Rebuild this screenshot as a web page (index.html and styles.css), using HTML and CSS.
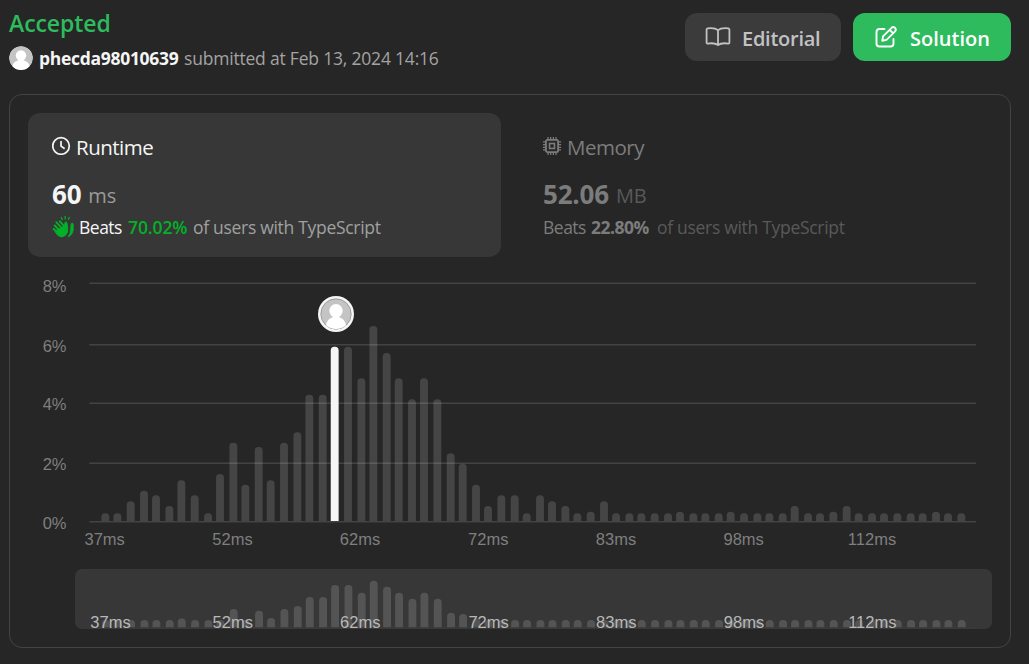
FILE: index.html
```html
<!DOCTYPE html>
<html lang="en">
<head>
<meta charset="utf-8">
<title>Submission result</title>
<link rel="stylesheet" href="styles.css">
</head>
<body>
<header class="header">
  <div class="summary">
    <h1 class="status">Accepted</h1>
    <div class="byline">
      <svg class="avatar" viewBox="0 0 24 24"><defs><clipPath id="round"><circle cx="12" cy="12" r="12"/></clipPath></defs><g clip-path="url(#round)"><circle cx="12" cy="12" r="12" fill="#c4c4c4"/><circle cx="12" cy="9.5" r="5.2" fill="#fff"/><path d="M9.5 12h5v2.2c3 1 6 2.8 6 6.300V24h-17v-3.500c0-3.500 3-5.300 6-6.300z" fill="#fff"/></g></svg>
      <span class="user">phecda98010639</span>
      <span class="when">submitted at Feb 13, 2024 14:16</span>
    </div>
  </div>
  <div class="actions">
    <button class="button"><svg class="book" viewBox="0 0 26 20" fill="none" stroke="currentColor" stroke-width="1.800" stroke-linejoin="round"><path d="M13 3.200C10.500.9 6 .9 2.700 1.300Q1.600 1.500 1.600 2.600V15.500Q1.600 16.800 2.800 16.600C6.500 16 10.500 16.200 13 18C15.500 16.200 19.500 16 23.200 16.600Q24.400 16.800 24.400 15.500V2.600Q24.400 1.500 23.300 1.300C20 .9 15.500.9 13 3.200zM13 3.200V18"/></svg><span class="label-editorial">Editorial</span></button>
    <button class="button primary"><svg class="pencil" viewBox="0 0 24 24" fill="none" stroke="currentColor" stroke-width="1.900" stroke-linecap="round" stroke-linejoin="round"><path d="M10.500 4H5.500Q2.500 4 2.500 7V18.500Q2.500 21.500 5.500 21.500H16.500Q19.500 21.500 19.500 18.500V14"/><path d="M8.300 15.700L9 11.400L17.600 2.800Q19.300 1.300 21 2.900Q22.600 4.600 21.100 6.300L12.500 14.900zM15.700 4.900L19 8.200"/></svg><span class="label-solution">Solution</span></button>
  </div>
</header>
<main class="card">
  <div class="tabs">
    <section class="tab active">
      <div class="title"><svg class="icon" viewBox="0 0 20 20" fill="none" stroke="currentColor" stroke-width="1.800" stroke-linecap="round"><circle cx="9.500" cy="10.500" r="8.700"/><path d="M9.500 5.800V10.700L12.700 12.900"/></svg><span class="t-runtime">Runtime</span></div>
      <div class="value"><b class="n-runtime">60</b><span class="unit u-ms">ms</span></div>
      <div class="beats"><svg class="clap" viewBox="0 0 22 22" fill="none" stroke="currentColor" stroke-linecap="round"><path d="M2.700 9.500L9 16M4.400 6.300L11 13.300M7.800 5.300L13.500 11.700M1.500 13L7 17" stroke-width="1.900"/><path d="M3.200 15.200L12.500 10L13 6.500Q14.500 4.800 15 7.500L15.700 12.500Q16 17 13.300 19.500Q9.500 22.300 6 19.500z" fill="currentColor" stroke-width="1"/><path d="M19.300 7.500Q21 6.200 21.300 8.500V14Q21 18.500 16 21.200Q19 17 18.600 13z" fill="currentColor" stroke-width=".7"/><path d="M9.300 1.500l1 2M13.200.5v2.500M17.300 1.500l-1 1.800" stroke-width="1.300"/></svg><span class="word">Beats</span><b class="pct">70.02%</b><span class="rest">of users with TypeScript</span></div>
    </section>
    <section class="tab memory">
      <div class="title"><svg class="icon" viewBox="0 0 20 20" fill="none" stroke="currentColor" stroke-width="1.900"><rect x="3.100" y="4.100" width="12.800" height="12.800" rx="1.700"/><rect x="6.900" y="7.900" width="5.200" height="5.200" stroke-width="1.700"/><path d="M5.300 4V1M8.100 4V1M10.900 4V1M13.700 4V1M5.300 20V17M8.100 20V17M10.900 20V17M13.700 20V17M0 6.300H3M0 9.100H3M0 11.900H3M0 14.700H3M16 6.300H19M16 9.100H19M16 11.900H19M16 14.700H19" stroke-width="1.300"/></svg><span class="t-memory">Memory</span></div>
      <div class="value"><b class="n-memory">52.06</b><span class="unit u-mb">MB</span></div>
      <div class="beats"><span class="word">Beats</span><b class="pct">22.80%</b><span class="rest">of users with TypeScript</span></div>
    </section>
  </div>
  <svg class="chart" viewBox="28 257 964 312">
    <g class="grid"><path d="M89.300 283.300H976M89.300 344.700H976M89.300 403.300H976M89.300 463.300H976M89.300 521.700H976"/></g>
    <g id="bars" class="bars"></g>
    <g class="axis"><text x="42.700" y="291.700">8%</text><text x="42.700" y="351.700">6%</text><text x="42.700" y="410">4%</text><text x="42.700" y="470">2%</text><text x="42.700" y="529">0%</text></g>
    <g id="labels" class="axis centered"></g>
    <g transform="translate(336 314)"><circle r="18" fill="#f5f5f5"/><circle r="15.200" fill="#c4c4c4" stroke="#888" stroke-width=".7"/><circle cy="-3.200" r="6.700" fill="#fff"/><path d="M-3.500 1h7v2.500C7.500 4.500 9.500 8 10 11.300A15 15 0 0 1-10 11.300C-9.500 8-7.500 4.500-3.500 3.500z" fill="#fff"/></g>
  </svg>
  <div class="brush"><svg class="mini" viewBox="75 569 917 60"><g id="miniBars" class="bars mini-bars"></g><path d="M89 628H976" class="mini-line"/><g id="miniLabels" class="axis centered bright"></g></svg></div>
</main>
<script src="chart.js"></script>
</body>
</html>
```
FILE: chart.js
```js
const heights = [7.7,7.7,19.7,30.3,25.7,15,40.7,25.7,7.7,47,78.3,36.3,74,40.7,78.3,88.7,126.3,126.3,174.3,174.3,142.700,195,168,142.700,121.700,142.700,121.700,67.700,57.300,36.300,15,25.700,25.700,7.700,25.700,19.700,15,7.700,9.300,19.700];
const extra = {45: 9.3, 49: 9.3, 54: 15, 57: 9.3, 58: 15, 65: 9.3};
for (let i = heights.length; i < 68; i++) heights.push(extra[i] || 7.7);
const mini = {6: 9, 10: 18.3, 12: 16.7, 13: 9.3, 14: 18.3, 15: 21.3, 16: 30.3, 17: 30.3, 18: 42.3, 19: 42.3, 20: 34.7, 21: 46.7, 22: 40.7, 23: 34.7, 24: 28.7, 25: 34.7, 26: 28.7, 27: 14.7, 28: 13.3, 29: 9};

// Bars sit on a 4/3 px lattice and have rounded tops.
function bar(i, h, base, cls, shift) {
  const x = 101.4 + shift + 4 / 3 * Math.floor(9.583 * i + 0.35);
  const r = 3.7;
  return `<path class="${cls}" d="M${x} ${base}v${-(h - r)}q0 ${-r} ${r} ${-r}h.5q${r} 0 ${r} ${r}v${h - r}z"/>`;
}
const ticks = [['37ms', 104.7], ['52ms', 232.5], ['62ms', 360], ['72ms', 488.3], ['83ms', 616], ['98ms', 743.7], ['112ms', 872]];
const text = (t, x, y) => `<text x="${x}" y="${y}">${t}</text>`;
document.getElementById('bars').innerHTML = heights.map((h, i) => bar(i, h, 521, i === 18 ? 'current' : '', 0)).join('');
document.getElementById('miniBars').innerHTML = heights.map((h, i) => bar(i, mini[i] || 7.5, 627.4, '', 0.4)).join('');
document.getElementById('labels').innerHTML = ticks.map(([t, x]) => text(t, x, 545)).join('');
document.getElementById('miniLabels').innerHTML = ticks.map(([t, x], i) => text(t, i ? x + 0.3 : 110.5, 628)).join('');
```
FILE: styles.css
```css
* { box-sizing: border-box; }
body { margin: 0; padding: 0 18px 0 9px; width: 1029px; height: 664px; overflow: hidden; background: #262626; color: #f5f5f5; font-family: "Open Sans", "Noto Sans", sans-serif; white-space: nowrap; }
.header { height: 94px; display: flex; justify-content: space-between; }
.summary { padding-top: 7px; }
.status { margin: 0; font-size: 23px; line-height: 32px; font-weight: 600; color: #2dbb5d; letter-spacing: -.08px; }
.byline { display: flex; align-items: center; height: 38px; font-size: 17.500px; }
.avatar { width: 24px; height: 24px; margin-right: 6px; }
.user { font-weight: 700; width: 140px; letter-spacing: -.3px; }
.when { margin-left: 5px; color: #a3a3a3; letter-spacing: -.2px; }
.actions { display: flex; gap: 12px; padding-top: 13px; }
.button { border: 0; border-radius: 12px; height: 48px; width: 156px; padding: 2px 0 0 20px; display: flex; align-items: center; font: 600 20px "Open Sans", sans-serif; background: #3b3b3b; color: #c2c2c4; }
.button.primary { width: 158px; padding-left: 21px; background: #2dbb5d; color: #fff; }
.label-editorial { letter-spacing: -.25px; }
.book { width: 26px; height: 20px; margin: -3px 11px 0 0; }
.pencil { width: 24px; height: 24px; margin: -3px 12px 0 0; }
.card { width: 1002px; height: 554px; border: 1px solid #434343; border-radius: 13px; padding: 18px; }
.tabs { display: flex; gap: 18px; }
.tab { width: 473px; height: 144px; border-radius: 12px; padding: 18px 24px 0; }
.tab.active { background: #373737; }
.title { display: flex; align-items: center; height: 32px; font-size: 20.500px; font-weight: 500; letter-spacing: -.5px; }
.icon { width: 19px; height: 19px; margin: -3px 5px 0 0; }
.value { display: flex; align-items: baseline; height: 36px; line-height: 36px; margin-top: 13px; font-size: 26px; }
.value b { font-weight: 700; letter-spacing: -.2px; }
.n-memory { letter-spacing: -.6px; }
.unit { position: relative; top: -1px; margin-left: 7px; font-size: 20px; letter-spacing: -.2px; color: #9b9b9b; }
.beats { display: flex; align-items: center; height: 26px; margin-top: 2px; font-size: 17.500px; letter-spacing: -.3px; }
.clap { width: 22px; height: 22px; margin: -1px 5px 0 0; color: #02b128; }
.word { width: 43px; letter-spacing: -.5px; }
.pct { width: 59px; margin: 0 6px; font-weight: 600; letter-spacing: -.1px; color: #02b128; }
.rest { color: #a0a0a0; }
.memory .pct { font-weight: 700; margin-left: 5px; width: 60px; letter-spacing: -.5px; }
.memory, .memory .pct { color: #7c7c7c; }
.memory .rest, .memory .unit { color: #595959; }
.chart { display: block; width: 964px; height: 312px; }
.grid { stroke: #434343; stroke-width: 1.400; }
.bars { fill: rgba(255, 255, 255, .145); }
.bars .current { fill: #f5f5f5; }
.axis { font: 16.500px "Liberation Sans", sans-serif; fill: #7f7f7f; }
.centered { text-anchor: middle; }
.bright { fill: #b8b8b8; }
.brush { width: 917px; height: 60px; margin-left: 47px; border-radius: 7px; background: #373737; }
.mini { display: block; width: 917px; height: 60px; overflow: visible; }
.mini-line { stroke: #3d3d3d; stroke-width: 1; }
```
